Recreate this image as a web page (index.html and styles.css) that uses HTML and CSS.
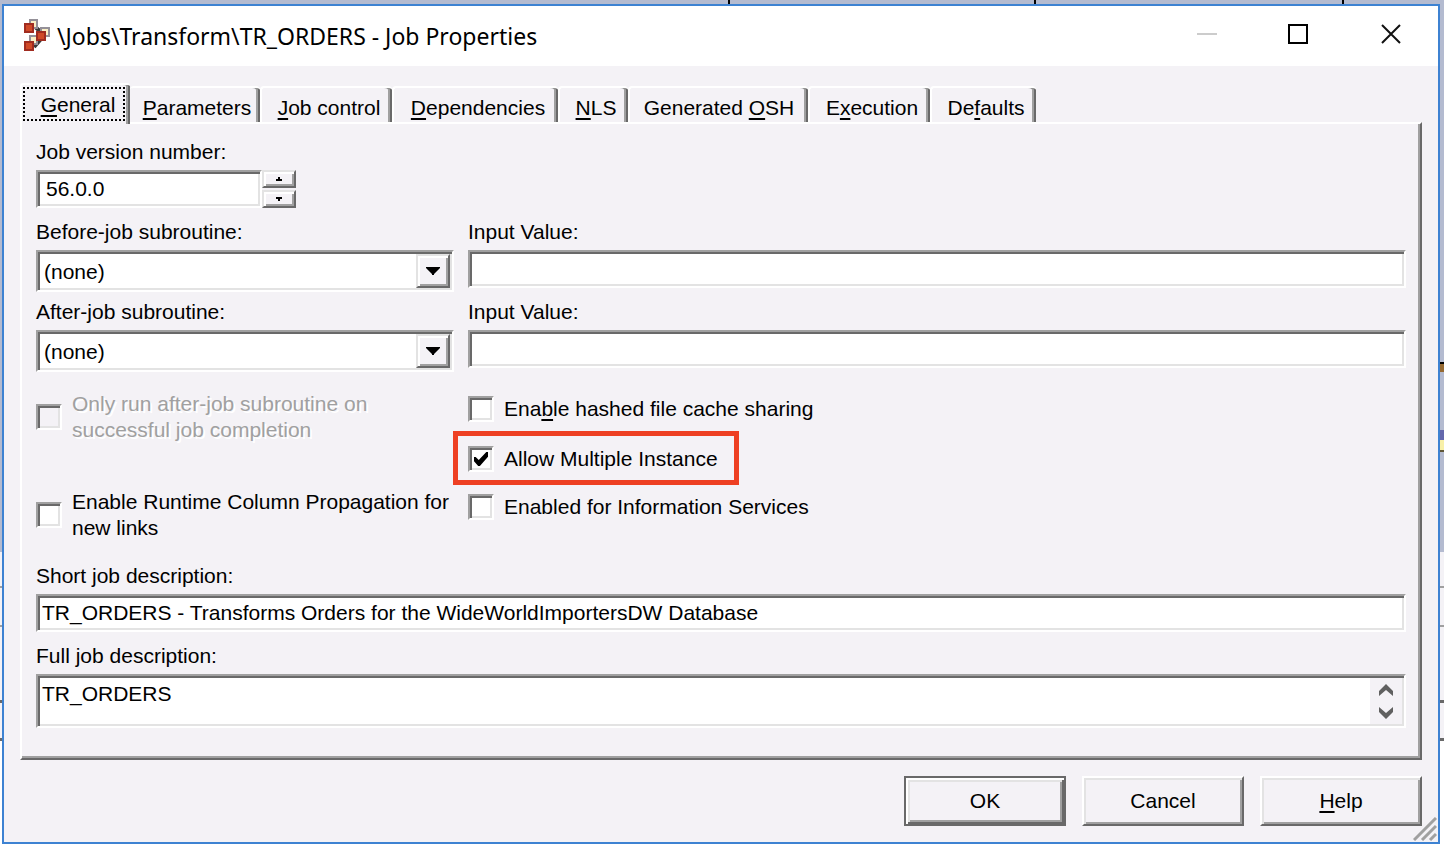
FILE: index.html
```html
<!DOCTYPE html>
<html lang="en">
<head>
<meta charset="utf-8">
<meta name="viewport" content="width=device-width, initial-scale=1">
<title>Job Properties</title>
<link rel="stylesheet" href="styles.css">
</head>
<body>
<main class="dialog">
  <header class="titlebar">
    <svg class="app-icon" width="28" height="34" viewBox="0 0 28 34" aria-hidden="true">
      <path d="M10 7 17 13M17 20 10 28" stroke="#3a3a3a" stroke-width="4"/>
      <path d="M6 1H13V9H6ZM17 9H25V17H17ZM6 17H13V25H6Z" fill="#fbefc4" stroke="#949098" stroke-width="2"/>
      <path d="M1 5H9V13H1ZM13 13H21V21H13ZM1 23H9V31H1Z" fill="#d04a28" stroke="#a02c20" stroke-width="2"/>
    </svg>
    <h1 class="title">\Jobs\Transform\TR_ORDERS - Job Properties</h1>
    <div class="window-buttons">
      <button class="window-button" type="button" aria-label="Minimize" disabled><svg width="22" height="22" viewBox="0 0 22 22"><path d="M1 11H21" stroke="#ccc" stroke-width="2"/></svg></button>
      <button class="window-button" type="button" aria-label="Maximize"><svg width="22" height="22" viewBox="0 0 22 22"><path d="M1 2H19V20H1Z" fill="none" stroke="#000" stroke-width="2"/></svg></button>
      <button class="window-button" type="button" aria-label="Close"><svg width="22" height="22" viewBox="0 0 22 22"><path d="M2 2 20 20M20 2 2 20" stroke="#111" stroke-width="2"/></svg></button>
    </div>
  </header>

  <nav class="tabs" role="tablist">
    <button class="tab tab-general" type="button" role="tab" aria-selected="true"><span class="focus"><u>G</u>eneral</span></button>
    <button class="tab tab-parameters" type="button" role="tab"><span><u>P</u>arameters</span></button>
    <button class="tab tab-control" type="button" role="tab"><span><u>J</u>ob control</span></button>
    <button class="tab tab-dependencies" type="button" role="tab"><span><u>D</u>ependencies</span></button>
    <button class="tab tab-nls" type="button" role="tab"><span><u>N</u>LS</span></button>
    <button class="tab tab-osh" type="button" role="tab"><span>Generated <u>O</u>SH</span></button>
    <button class="tab tab-execution" type="button" role="tab"><span>E<u>x</u>ecution</span></button>
    <button class="tab tab-defaults" type="button" role="tab"><span>De<u>f</u>aults</span></button>
  </nav>

  <section class="panel">
    <div class="field">
      <label for="version">Job version number:</label>
      <div class="version">
        <input class="box version-box" id="version" type="text" value="56.0.0">
        <div class="spinner">
          <button type="button" aria-label="Increase"><svg width="6" height="4" viewBox="0 0 6 4"><path d="M2 0H4V2H6V4H0V2H2Z"/></svg></button>
          <button type="button" aria-label="Decrease"><svg width="6" height="4" viewBox="0 0 6 4"><path d="M0 0H6V2H4V4H2V2H0Z"/></svg></button>
        </div>
      </div>
    </div>

    <div class="columns">
      <div class="field">
        <label for="before">Before-job subroutine:</label>
        <div class="combo">
          <select id="before"><option>(none)</option></select>
          <span class="combo-arrow"><svg width="14" height="8" viewBox="0 0 14 8"><path d="M0 0H14V1L8 7V8H6V7L0 1Z"/></svg></span>
        </div>
      </div>
      <div class="field">
        <label for="before-input">Input Value:</label>
        <input class="box" id="before-input" type="text">
      </div>
      <div class="field">
        <label for="after">After-job subroutine:</label>
        <div class="combo">
          <select id="after"><option>(none)</option></select>
          <span class="combo-arrow"><svg width="14" height="8" viewBox="0 0 14 8"><path d="M0 0H14V1L8 7V8H6V7L0 1Z"/></svg></span>
        </div>
      </div>
      <div class="field">
        <label for="after-input">Input Value:</label>
        <input class="box" id="after-input" type="text">
      </div>
    </div>

    <div class="columns options">
      <div class="left-options">
        <label class="option disabled"><input type="checkbox" disabled><span>Only run after-job subroutine on<br>successful job completion</span></label>
        <label class="option"><input type="checkbox"><span>Enable Runtime Column Propagation for<br>new links</span></label>
      </div>
      <div class="right-options">
        <label class="option"><input type="checkbox"><span>Ena<u>b</u>le hashed file cache sharing</span></label>
        <label class="option highlight"><input type="checkbox" checked><span>Allow Multiple Instance</span></label>
        <label class="option"><input type="checkbox"><span>Enabled for Information Services</span></label>
      </div>
    </div>

    <div class="field">
      <label for="short">Short job description:</label>
      <input class="box" id="short" type="text" value="TR_ORDERS - Transforms Orders for the WideWorldImportersDW Database">
    </div>
    <div class="field">
      <label for="full">Full job description:</label>
      <div class="memo">
        <textarea id="full" rows="1">TR_ORDERS</textarea>
        <div class="scroll">
          <button type="button" aria-label="Scroll up"><svg width="14" height="12" viewBox="0 0 14 12"><path d="M7 0 14 7V12L7 6 0 12V7Z"/></svg></button>
          <button type="button" aria-label="Scroll down"><svg width="14" height="12" viewBox="0 0 14 12"><path d="M7 12 14 5V0L7 6 0 0V5Z"/></svg></button>
        </div>
      </div>
    </div>
  </section>

  <footer class="actions">
    <button class="action default" type="button">OK</button>
    <button class="action" type="button">Cancel</button>
    <button class="action" type="button"><span><u>H</u>elp</span></button>
  </footer>
  <svg class="grip" width="24" height="24" viewBox="0 0 24 24" aria-hidden="true">
    <path d="M1 23 23 1M9 23 23 9M17 23 23 17" stroke="#a0a0a0" stroke-width="3"/>
  </svg>
</main>
</body>
</html>
```
FILE: styles.css
```css
:root {
  --face: #f4f2f6;
  --light: #e3e3e3;
  --shade: #a0a0a0;
  --dark: #696969;
}

* { box-sizing: border-box; }

body {
  margin: 0;
  min-height: 100vh;
  padding: 4px 4px 2px 2px;
  display: flex;
  color: #000;
  font: 21px/24px "Liberation Sans", Arial, sans-serif;
  /* Slivers of the application behind the dialog */
  background:
    linear-gradient(#000, #000) 728px 0 / 2px 4px no-repeat,
    linear-gradient(#000, #000) 1034px 0 / 2px 4px no-repeat,
    linear-gradient(#000, #000) 1342px 0 / 2px 4px no-repeat,
    linear-gradient(#000 0 2px, #966a32 2px 10px) right 0 top 362px / 4px 10px no-repeat,
    linear-gradient(#6468ac 0 10px, #f8f0a8 10px 20px, #605838 20px 22px) right 0 top 430px / 4px 22px no-repeat,
    linear-gradient(#b4bbd0 0 552px, #f4f2f6 552px 586px, #a0a0a0 586px 588px, #f4f2f6 588px 625px, #a0a0a0 625px 627px, #f4f2f6 627px 700px, #696969 700px 703px, #f4f2f6 703px 738px, #696969 738px 741px, #fff 741px);
}

button, input, select, textarea { font: inherit; color: inherit; margin: 0; }
button { padding: 0; border: 0; background: var(--face); display: grid; place-items: center; }
u { text-decoration-thickness: 2px; text-underline-offset: 3px; text-decoration-skip-ink: none; }

.dialog {
  position: relative;
  flex: 1;
  min-width: 0;
  display: flex;
  flex-direction: column;
  border: 2px solid #3d82d2;
  background: var(--face);
}

.titlebar {
  height: 60px;
  padding: 0 17px 0 20px;
  display: flex;
  align-items: center;
  gap: 5px;
  background: #fff;
}
.title { flex: 1; margin: 0; font: 23px/32px "Noto Sans", "Open Sans", sans-serif; white-space: nowrap; }
.window-buttons { display: flex; gap: 32px; padding-bottom: 4px; }
.window-button { width: 60px; height: 40px; background: transparent; }

.tabs { display: flex; align-items: flex-end; padding: 17px 16px 0; }
.tab {
  height: 36px;
  padding: 6px 0 0 4px;
  border-top: 2px solid #fff;
  border-left: 2px solid #fff;
  border-radius: 4px 4px 0 0;
  box-shadow: inset -2px 0 var(--dark), inset -4px 0 var(--shade);
}
.tab-general { height: 41px; width: 110px; margin-bottom: -2px; padding: 0 4px 2px 0; position: relative; border-radius: 3px 3px 0 0; }
.tab-parameters { width: 130px; border-left: 0; }
.tab-control { width: 132px; }
.tab-dependencies { width: 166px; }
.tab-nls { width: 70px; }
.tab-osh { width: 180px; padding-left: 0; }
.tab-execution { width: 122px; }
.tab-defaults { width: 106px; }
.focus { width: 102px; height: 34px; padding: 4px 0 0 8px; border: 2px dotted #000; }

.panel {
  margin: 0 16px;
  padding: 16px 14px 30px 14px;
  border: 2px solid #fff;
  border-right-color: var(--dark);
  border-bottom-color: var(--dark);
  box-shadow: inset -2px -2px var(--shade);
}
.columns { display: grid; grid-template-columns: 418px minmax(0, 1fr); column-gap: 14px; }
.field { min-height: 80px; display: flex; flex-direction: column; align-items: stretch; gap: 6px; }

.box, .combo, .memo, .option input {
  border: 2px solid var(--shade);
  border-right-color: #fff;
  border-bottom-color: #fff;
  box-shadow: inset 2px 2px var(--dark), inset -2px -2px var(--light);
  background: #fff;
  outline: 0;
}
.box { width: 100%; height: 38px; padding: 2px 4px; border-radius: 0; }
.version { display: flex; gap: 0; }
.version .version-box { width: 226px; padding-left: 8px; }
.spinner { display: grid; gap: 2px; }
.spinner button {
  width: 34px;
  height: 18px;
  border: 2px solid #fff;
  border-color: var(--light) var(--dark) var(--dark) var(--light);
  box-shadow: inset 2px 2px #fff, inset -2px -2px var(--shade);
}

.combo { display: grid; height: 42px; padding: 2px; }
.combo select { grid-area: 1 / 1; width: 100%; appearance: none; border: 0; background: transparent; padding: 2px 4px 0; outline: 0; }
.combo-arrow {
  grid-area: 1 / 1;
  justify-self: end;
  width: 34px;
  display: grid;
  place-items: center;
  pointer-events: none;
  background: var(--face);
  border: 2px solid var(--light);
  border-right-color: var(--dark);
  border-bottom-color: var(--dark);
  box-shadow: inset 2px 2px #fff, inset -2px -2px var(--shade);
}

.options { padding-top: 11px; min-height: 184px; }
.left-options { display: flex; flex-direction: column; gap: 46px; }
.right-options { display: flex; flex-direction: column; align-items: flex-start; gap: 9px; padding-top: 5px; }
.option { display: flex; align-items: center; gap: 10px; line-height: 26px; white-space: nowrap; }
.option input { appearance: none; width: 26px; height: 26px; flex: none; display: grid; place-items: center; }
.option input:checked::before {
  content: "";
  width: 14px;
  height: 14px;
  background: #000;
  clip-path: polygon(0 35%, 12% 35%, 34% 58%, 88% 0, 100% 0, 100% 34%, 42% 100%, 30% 100%, 0 66%);
}
.option.disabled { color: #a0a0a0; text-shadow: 2px 2px #fff; }
.option input:disabled { background: var(--face); }
.highlight { margin-left: -15px; padding: 10px 16px 8px 10px; border: 5px solid #ee4023; }

.memo { height: 54px; padding: 2px; display: flex; }
.memo textarea { flex: 1; min-width: 0; border: 0; outline: 0; resize: none; overflow: hidden; padding: 4px 2px; background: transparent; }
.scroll { width: 32px; display: grid; background: var(--face); }
.scroll button { background: transparent; }
.scroll path { fill: #606060; }

.actions { display: flex; justify-content: flex-end; gap: 16px; padding: 16px; }
.action {
  width: 162px;
  height: 50px;
  border: 2px solid #fff;
  border-right-color: var(--dark);
  border-bottom-color: var(--dark);
  box-shadow: inset 2px 2px var(--light), inset -2px -2px var(--shade);
}
.action.default {
  border-color: var(--dark);
  box-shadow: inset 2px 2px #fff, inset -2px -2px var(--dark), inset 4px 4px var(--light), inset -4px -4px var(--shade);
}
.grip { position: absolute; right: 1px; bottom: 1px; }
```
